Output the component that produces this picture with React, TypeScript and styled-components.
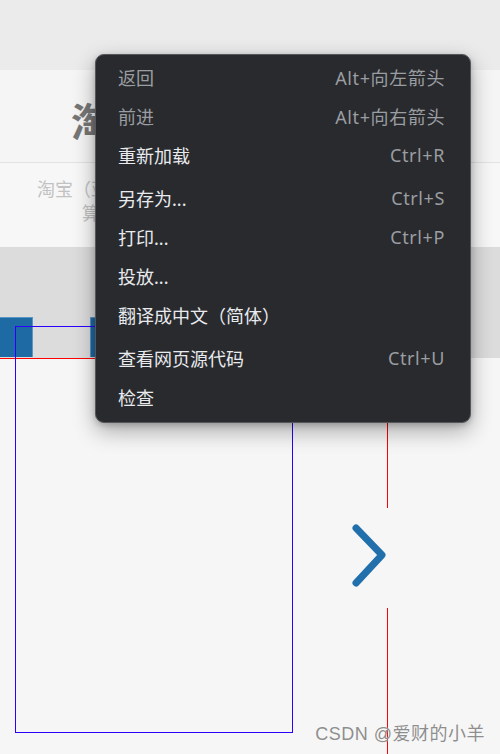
import React from "react";
import styled, { createGlobalStyle } from "styled-components";

const GlobalStyle = createGlobalStyle`
  html, body {
    margin: 0;
    padding: 0;
    background: #f6f6f6;
  }
  body {
    font-family: "Noto Sans", "Noto Sans CJK SC", sans-serif;
  }
  * {
    box-sizing: border-box;
  }
`;

const Page = styled.div`
  position: relative;
  width: 500px;
  height: 754px;
  display: flex;
  flex-direction: column;
  overflow: hidden;
  background: #f6f6f6;
`;

const TopBar = styled.div`
  height: 70px;
  flex: none;
  background: #ebebeb;
`;

const TitleBand = styled.div`
  height: 93px;
  flex: none;
  padding: 30px 0 0 2px;
  background: #f5f5f5;
  border-bottom: 1px solid #e2e2e2;
  text-align: center;
`;

const Title = styled.h1`
  margin: 0;
  font-family: "Noto Sans CJK SC", sans-serif;
  font-size: 40px;
  line-height: 40px;
  font-weight: 700;
  color: #767676;
`;

const Intro = styled.div`
  height: 84px;
  flex: none;
  padding: 13px 0 0 6px;
  background: #f7f7f7;
  text-align: center;
`;

const IntroLine = styled.p`
  margin: 0;
  font-family: "Noto Sans CJK SC", sans-serif;
  font-size: 18px;
  line-height: 24px;
  color: #c2c2c2;
  white-space: nowrap;
`;

const TabBand = styled.div`
  height: 111px;
  flex: none;
  display: flex;
  align-items: flex-end;
  gap: 57px;
  padding-bottom: 1px;
  margin-left: -37px;
  background: #dcdcdc;
`;

const Tab = styled.div`
  width: 70px;
  height: 40px;
  background: #1e6aa4;
  border: 1px solid #5b95c4;
  border-bottom: none;
`;

const Stage = styled.div`
  position: relative;
  flex: 1;
  background: #f6f6f6;
`;

const Carousel = styled.div`
  width: 389px;
  height: 420px;
  margin-left: -1px;
  border: 1px solid #ff0000;
`;

const Outline = styled.div`
  position: absolute;
  left: 15px;
  top: -32px;
  width: 278px;
  height: 407px;
  border: 1px solid #2a00ff;
  pointer-events: none;
`;

const NextButton = styled.button`
  position: absolute;
  left: 340px;
  top: 150px;
  width: 56px;
  height: 100px;
  padding: 0;
  border: none;
  background: #f6f6f6;
  display: flex;
  align-items: center;
  justify-content: center;
  cursor: pointer;
`;

const Watermark = styled.div`
  position: absolute;
  right: 15px;
  bottom: 9px;
  font-family: "Liberation Sans", "Noto Sans CJK SC", sans-serif;
  font-size: 18px;
  line-height: 22px;
  letter-spacing: 0.5px;
  color: #8e8e8e;
  text-shadow: 0 0 1px rgba(255, 255, 255, 0.9);
`;

const ContextMenu = styled.div`
  position: absolute;
  left: 95px;
  top: 54px;
  width: 376px;
  padding: 2px 0 6px;
  background: #292a2d;
  border: 1px solid #56575b;
  border-radius: 9px;
  box-shadow: 0 8px 22px rgba(0, 0, 0, 0.32), 0 2px 6px rgba(0, 0, 0, 0.2);
`;

const MenuItem = styled.div<{ $disabled?: boolean }>`
  height: 39px;
  display: flex;
  align-items: center;
  justify-content: space-between;
  padding: 0 25px 0 22px;
  font-family: "Noto Sans", "Noto Sans CJK SC", sans-serif;
  font-size: 18px;
  color: ${(p) => (p.$disabled ? "#9a9da2" : "#e8eaed")};
  white-space: nowrap;
`;

const Shortcut = styled.span`
  color: #9a9da2;
  letter-spacing: 0.6px;
`;

const Separator = styled.div`
  height: 4px;
`;

type Entry =
  | { label: string; shortcut?: string; disabled?: boolean }
  | "sep";

const entries: Entry[] = [
  { label: "返回", shortcut: "Alt+向左箭头", disabled: true },
  { label: "前进", shortcut: "Alt+向右箭头", disabled: true },
  { label: "重新加载", shortcut: "Ctrl+R" },
  "sep",
  { label: "另存为...", shortcut: "Ctrl+S" },
  { label: "打印...", shortcut: "Ctrl+P" },
  { label: "投放..." },
  { label: "翻译成中文（简体）" },
  "sep",
  { label: "查看网页源代码", shortcut: "Ctrl+U" },
  { label: "检查" },
];

export default function App() {
  return (
    <>
      <GlobalStyle />
      <Page>
        <TopBar />
        <TitleBand>
          <Title>淘宝轮播图切换效果</Title>
        </TitleBand>
        <Intro>
          <IntroLine>淘宝（亚太地区较大的网络零售商圈）由阿里巴巴集团</IntroLine>
          <IntroLine>算法推荐为用户呈现丰富的商品与内容展示</IntroLine>
        </Intro>
        <TabBand>
          <Tab />
          <Tab />
          <Tab />
        </TabBand>
        <Stage>
          <Carousel />
          <Outline />
          <NextButton aria-label="下一张">
            <svg width="56" height="100" viewBox="0 0 56 100">
              <polyline
                points="16,20 42,47 16,75"
                fill="none"
                stroke="#2270ab"
                strokeWidth="7"
                strokeLinecap="round"
                strokeLinejoin="round"
              />
            </svg>
          </NextButton>
        </Stage>
        <Watermark>CSDN @爱财的小羊</Watermark>
        <ContextMenu>
          {entries.map((e, i) =>
            e === "sep" ? (
              <Separator key={i} />
            ) : (
              <MenuItem key={i} $disabled={e.disabled}>
                <span>{e.label}</span>
                {e.shortcut && <Shortcut>{e.shortcut}</Shortcut>}
              </MenuItem>
            )
          )}
        </ContextMenu>
      </Page>
    </>
  );
}
